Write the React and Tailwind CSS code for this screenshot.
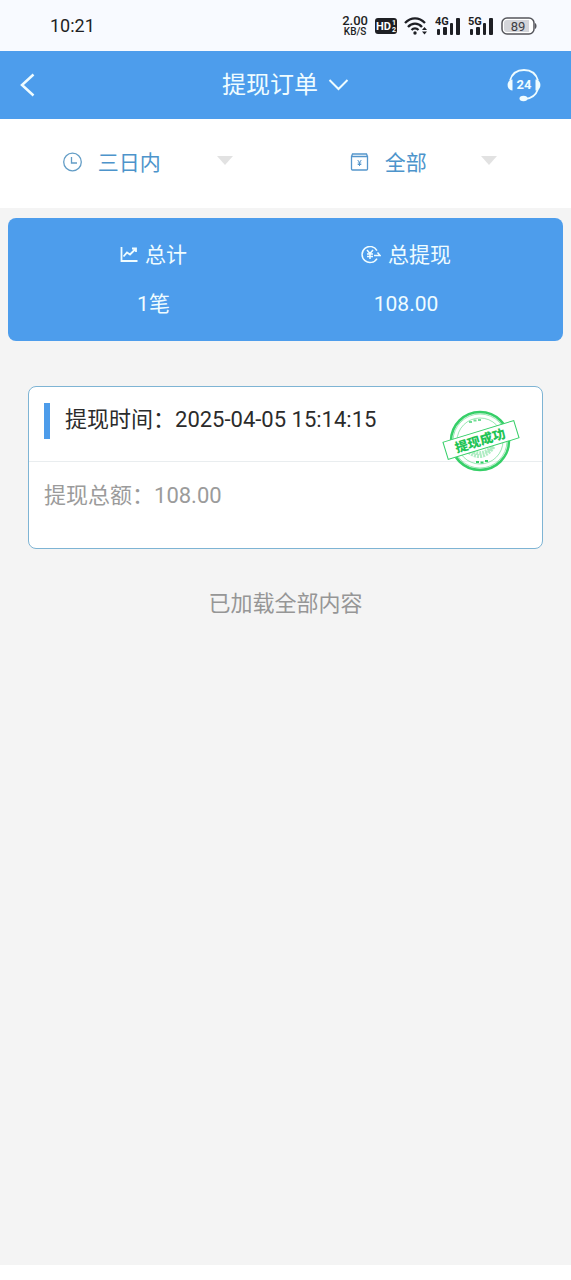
import React, { useState } from 'react';

const RANGE_OPTIONS = [
    { value: '3d', label: '三日内' },
    { value: '7d', label: '七日内' },
];

const TYPE_OPTIONS = [
    { value: 'all', label: '全部' },
    { value: 'done', label: '成功' },
];

const ORDERS = [
    { id: 1, time: '2025-04-05 15:14:15', amount: '108.00' },
];

const SignalIcon = ({ label }) => (
    <svg width="26" height="20" viewBox="0 0 26 20" fill="#1e1f24">
        <text x="0" y="9" fontSize="11" fontWeight="700">{label}</text>
        <rect x="2" y="13" width="3" height="6" rx="1" />
        <rect x="8" y="11" width="4" height="8" rx="1" />
        <rect x="15" y="7" width="3" height="12" rx="1" />
        <rect x="21" y="2" width="4" height="17" rx="1" />
    </svg>
);

const StatusBar = () => (
    <div className="h-[51px] px-[34px] flex items-center justify-between bg-[#f8faff] text-[#1e1f24]">
        <span className="pl-4 text-[18px] leading-6">10:21</span>
        <div className="flex items-center gap-[7px]">
            <div className="flex flex-col items-center font-medium">
                <span className="text-[13px] leading-[12px]">2.00</span>
                <span className="text-[10px] leading-[10px]">KB/S</span>
            </div>
            <svg width="22" height="16" viewBox="0 0 22 16">
                <rect width="22" height="16" rx="3" fill="#1e1f24" />
                <text x="1" y="12" fontSize="11" fontWeight="700" fill="#fff">HD</text>
                <text x="17" y="7" fontSize="7" fontWeight="700" fill="#fff">1</text>
                <text x="17" y="14" fontSize="7" fontWeight="700" fill="#fff">2</text>
            </svg>
            <svg width="24" height="18" viewBox="0 0 24 18" fill="none" stroke="#1e1f24" strokeWidth="2.3">
                <path d="M1 6C7 -.2 15 -.2 21 6" />
                <path d="M4 10C8 5.500 14 5.500 18 10" />
                <path d="M7.500 13C9.500 11 12.500 11 14.500 13" />
                <circle cx="11" cy="16" r="1.700" fill="#1e1f24" stroke="none" />
                <path d="M18 13l2.500-3 2.500 3zM18 14.500l2.500 3 2.500-3z" fill="#1e1f24" stroke="none" />
            </svg>
            <SignalIcon label="4G" />
            <SignalIcon label="5G" />
            <svg width="36" height="18" viewBox="0 0 36 18">
                <rect x="1" y="1" width="32" height="16" rx="5" fill="#fff" stroke="#55565c" strokeWidth="1.5" />
                <path d="M6 3h22v12H6a3 3 0 0 1-3-3V6a3 3 0 0 1 3-3z" fill="#d4d5da" />
                <path d="M34 6c2 1 2 5 0 6z" fill="#55565c" />
                <text x="17" y="14" fontSize="13" textAnchor="middle" fill="#3d3e44">89</text>
            </svg>
        </div>
    </div>
);

const HeadsetIcon = () => (
    <svg width="34" height="34" viewBox="0 0 34 34" fill="none" stroke="#effcff" strokeWidth="1.8">
        <path d="M3 12.5C5 5.5 10 2 17 2s12 3.5 14 10.5" />
        <path d="M31 21C29 27 25 30.5 18 31" />
        <path d="M5.500 11.500v11C2.500 22.500.6 20 .6 17s1.900-5.500 4.900-5.500z" fill="#effcff" stroke="none" />
        <path d="M28.500 11.500v11c3 0 4.900-2.500 4.900-5.500s-1.900-5.500-4.900-5.500z" fill="#effcff" stroke="none" />
        <ellipse cx="16.500" cy="30.500" rx="4" ry="2.700" fill="#effcff" stroke="none" />
        <text x="17" y="21" fontSize="13" fontWeight="700" textAnchor="middle" fill="#effcff" stroke="none">24</text>
    </svg>
);

const ClockIcon = () => (
    <svg width="19" height="20" viewBox="0 0 19 20" fill="none" stroke="#639dc6" strokeWidth="1.3">
        <circle cx="9.500" cy="10" r="8.800" />
        <path d="M8.500 5v6H14" />
    </svg>
);

const WalletIcon = () => (
    <svg width="19" height="20" viewBox="0 0 19 20" fill="none" stroke="#5596cc" strokeWidth="1.3">
        <path d="M1.500 4.500L2.500 2h14l1 2.500M1.500 4.500h16V17a1 1 0 0 1-1 1h-14a1 1 0 0 1-1-1z" />
        <path d="M7.700 8l1.800 2.500L11.300 8M9.500 10.500V14M7.700 11h3.600M7.700 12.500h3.600" strokeWidth="1" />
    </svg>
);

const TrendIcon = () => (
    <svg width="18" height="18" viewBox="0 0 18 18" fill="none" stroke="#effcff" strokeWidth="1.8">
        <path d="M1.500 1v14h16M3.500 10.500L7 6.500l3 2L15.500 3M12 2.500h4V6" />
    </svg>
);

const YuanIcon = () => (
    <svg width="20" height="18" viewBox="0 0 20 18" fill="none" stroke="#effcff" strokeWidth="1.5">
        <path d="M16 4.500A8 8 0 1 0 16 12.500M13 9.500H19l-2.500-3" />
        <path d="M6 4L9 7.500l3-3.500M9 7.500v5.500M6 8h6M6 10.500h6" />
    </svg>
);

const SuccessStamp = () => (
    <svg width="78" height="64" viewBox="0 0 78 64" fill="none" stroke="#36cf68">
        <circle cx="38" cy="32" r="29" strokeWidth="2.5" />
        <circle cx="38" cy="32" r="27" strokeWidth="1" opacity="0.5" />
        <circle cx="38" cy="32" r="23" strokeWidth="1" opacity="0.5" />
        <path d="M27 13h3M31.500 11.500h3M36 11h3" strokeWidth="2" opacity="0.7" />
        <path d="M34 53h3M38.500 53.500h3M43 52h3" strokeWidth="2" />
        <path d="M27 43c8 7 18 5 25-6M29 41c7 6 16 3 22-4" strokeWidth="4" strokeDasharray="2 1" opacity="0.4" />
        <g transform="rotate(-17 39 31)">
            <rect x="2" y="22" width="74" height="18" fill="#fff" strokeWidth="1" />
            <text x="38" y="36" fontSize="13" fontWeight="900" textAnchor="middle" fill="#1fc455" stroke="none">提现成功</text>
        </g>
    </svg>
);

const FilterSelect = ({ label, icon, options, value, onChange, widthClass }) => (
    <label className="flex-1 flex items-center justify-center">
        <span className="sr-only">{label}</span>
        {icon}
        <select
            value={value}
            onChange={(e) => onChange(e.target.value)}
            className={`${widthClass} ml-4 pt-0.5 text-[21px] leading-10 text-[#4d94cb] bg-transparent appearance-none outline-none`}
        >
            {options.map((o) => (
                <option key={o.value} value={o.value}>{o.label}</option>
            ))}
        </select>
        <svg width="16" height="14" viewBox="0 0 16 14" fill="#e2e2e2">
            <path d="M0 1h16L8 10z" />
        </svg>
    </label>
);

const OrderCard = ({ order }) => (
    <article className="relative h-[163px] mx-7 bg-white border border-[#7eb4d4] rounded-lg text-[22px] leading-8">
        <div className="h-[75px] px-[15px] pt-4 border-b border-[#e9edef]">
            <div className="flex items-center h-9 border-l-6 border-[#4d9cea] pl-[15px] pb-0.5 text-[#2b2b2b]">
                提现时间：{order.time}
            </div>
        </div>
        <p className="px-[15px] pt-[18px] text-[#9b9b9b]">提现总额：{order.amount}</p>
        <div className="absolute right-[22px] top-[22px]">
            <SuccessStamp />
        </div>
    </article>
);

const App = () => {
    const [range, setRange] = useState('3d');
    const [type, setType] = useState('all');

    return (
        <div className="min-h-screen flex flex-col bg-white font-['Roboto','Noto_Sans_CJK_SC',sans-serif]">
            <StatusBar />

            <header className="h-[68px] px-4 flex items-center justify-between bg-[#4d9dec] text-[#effcff]">
                <button type="button" aria-label="返回" className="w-12">
                    <svg width="22" height="26" viewBox="0 0 22 26" fill="none" stroke="currentColor" strokeWidth="2.5">
                        <path d="M17.500 2.500L6 13l11.500 10.500" />
                    </svg>
                </button>
                <button type="button" className="flex items-center gap-2.5 text-[24px] leading-8">
                    提现订单
                    <svg width="21" height="14" viewBox="0 0 21 14" fill="none" stroke="currentColor" strokeWidth="2">
                        <path d="M1.500 2l9 9 9-9" />
                    </svg>
                </button>
                <button type="button" aria-label="客服" className="w-12">
                    <HeadsetIcon />
                </button>
            </header>

            {/* 筛选 */}
            <div className="h-[89px] px-2.5 pb-1 flex bg-white">
                <FilterSelect label="时间" icon={<ClockIcon />} options={RANGE_OPTIONS} value={range} onChange={setRange} widthClass="w-[119px]" />
                <FilterSelect label="类型" icon={<WalletIcon />} options={TYPE_OPTIONS} value={type} onChange={setType} widthClass="w-[96px]" />
            </div>

            <main className="flex-1 pt-2.5 bg-[#f4f4f4]">
                {/* 汇总 */}
                <section className="mx-2 rounded-lg bg-[#4d9dec] text-[#effcff] text-[21px] leading-8">
                    <dl className="h-[123px] px-28 pt-[21px] flex justify-between text-center">
                        <div className="flex flex-col gap-[17px]">
                            <dt className="flex items-center gap-[7px]"><TrendIcon />总计</dt>
                            <dd>1笔</dd>
                        </div>
                        <div className="flex flex-col gap-[17px]">
                            <dt className="flex items-center gap-[7px]"><YuanIcon />总提现</dt>
                            <dd>108.00</dd>
                        </div>
                    </dl>
                </section>

                <div className="pt-[45px]">
                    {ORDERS.map((order) => (
                        <OrderCard key={order.id} order={order} />
                    ))}
                </div>
                <p className="pt-[39px] text-center text-[22px] leading-8 text-[#969696]">已加载全部内容</p>
            </main>
            <div className="h-[15px] bg-white" />
        </div>
    );
};

export default App;
